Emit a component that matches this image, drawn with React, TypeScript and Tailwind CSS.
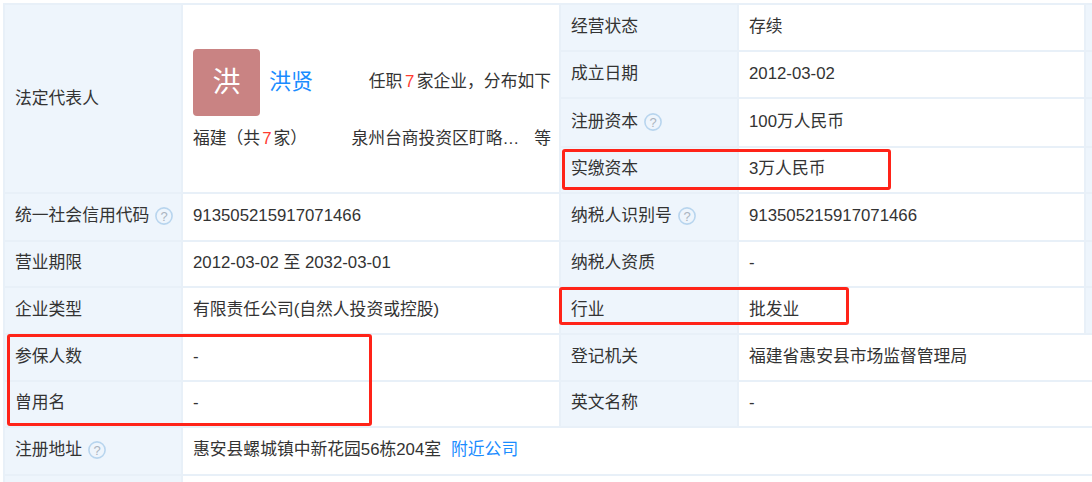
import React from "react";

function Help() {
  return (
    <svg width="18" height="18" viewBox="0 0 18 18" className="ml-[6px] shrink-0">
      <circle cx="9" cy="9" r="8.1" fill="none" stroke="#b8d5ee" strokeWidth="1.6" />
      <text x="9" y="13.6" textAnchor="middle" fontSize="13" fill="#aab4bf" fontFamily="Liberation Sans, sans-serif">?</text>
    </svg>
  );
}

function Label({ children, help, className = "" }: { children: React.ReactNode; help?: boolean; className?: string }) {
  return (
    <div className={`flex items-center border-t-2 border-l-2 border-[#e8f0f8] bg-[#eef5fc] pl-[10px] ${className}`}>
      <span>{children}</span>
      {help && <Help />}
    </div>
  );
}

function Value({ children, className = "" }: { children?: React.ReactNode; className?: string }) {
  return (
    <div className={`flex items-center border-t-2 border-l-2 border-[#e8f0f8] bg-white pb-[2px] pl-[10px] ${className}`}>
      {children}
    </div>
  );
}

function Edge({ className = "" }: { className?: string }) {
  return <div className={`border-t-2 border-l-2 border-[#e8f0f8] bg-[#eef5fc] ${className}`} />;
}

function Blank() {
  return <div className="border-t-2 border-[#e8f0f8] bg-white" />;
}

export default function App() {
  return (
    <div className="relative h-[482px] w-[1092px] overflow-hidden bg-white pt-[3px] pl-[3px] font-['Liberation_Sans','Noto_Sans_CJK_SC',sans-serif] text-[16.8px] text-[#333]">
      <div className="grid grid-cols-[178px_378px_178px_347px_8px] grid-rows-[47px_47px_49px_46px_48px_46px_47px_47px_46px_48px_8px]">
        <Label className="row-span-4">法定代表人</Label>
        <div className="row-span-4 flex flex-col justify-center gap-[10px] border-t-2 border-l-2 border-[#e8f0f8] bg-white pt-[4px] pr-[8px] pl-[10px]">
          <div className="flex items-center">
            <div className="flex h-[67px] w-[67px] items-center justify-center rounded-[4px] bg-[#c98383] text-[28px] text-white">洪</div>
            <span className="mb-[3px] ml-[9px] text-[22px] text-[#1a8cff]">洪贤</span>
            <span className="mb-[3px] ml-auto whitespace-nowrap">
              任职<span className="mx-[2.5px] text-[#ff3b30]">7</span>家企业，分布如下
            </span>
          </div>
          <div className="flex items-center">
            <span className="whitespace-nowrap">
              福建（共<span className="mx-[2px] text-[#ff3b30]">7</span>家）
            </span>
            <span className="ml-auto whitespace-nowrap">泉州台商投资区盯略…</span>
            <span className="ml-[15px]">等</span>
          </div>
        </div>

        <Label className="pb-[2px]">经营状态</Label>
        <Value>存续</Value>
        <Edge />
        <Label className="pb-[2px]">成立日期</Label>
        <Value>2012-03-02</Value>
        <Edge />
        <Label help className="pb-[2px]">注册资本</Label>
        <Value>100万人民币</Value>
        <Edge />
        <Label className="pb-[2px]">实缴资本</Label>
        <Value>3万人民币</Value>
        <Edge />

        <Label help className="pb-[2px]">统一社会信用代码</Label>
        <Value>913505215917071466</Value>
        <Label help className="pb-[2px]">纳税人识别号</Label>
        <Value>913505215917071466</Value>
        <Edge />

        <Label className="pb-[2px]">营业期限</Label>
        <Value>2012-03-02 至 2032-03-01</Value>
        <Label className="pb-[2px]">纳税人资质</Label>
        <Value>-</Value>
        <Edge />

        <Label className="pb-[2px]">企业类型</Label>
        <Value>有限责任公司(自然人投资或控股)</Value>
        <Label className="pb-[2px]">行业</Label>
        <Value>批发业</Value>
        <Edge />

        <Label className="pb-[2px]">参保人数</Label>
        <Value>-</Value>
        <Label className="pb-[2px]">登记机关</Label>
        <Value>福建省惠安县市场监督管理局</Value>
        <Blank />

        <Label className="pb-[2px]">曾用名</Label>
        <Value>-</Value>
        <Label className="pb-[2px]">英文名称</Label>
        <Value>-</Value>
        <Blank />

        <Label help className="pb-[2px]">注册地址</Label>
        <Value className="col-span-4">
          惠安县螺城镇中新花园56栋204室
          <span className="ml-[10px] text-[#1a8cff]">附近公司</span>
        </Value>

        <Label>{""}</Label>
        <Value className="col-span-4" />
      </div>

      <div className="absolute top-[149px] left-[562px] h-[41px] w-[329px] rounded-[3px] border-[3px] border-[#ff2318]" />
      <div className="absolute top-[287px] left-[559px] h-[38px] w-[290px] rounded-[3px] border-[3px] border-[#ff2318]" />
      <div className="absolute top-[334px] left-[7px] h-[92px] w-[365px] rounded-[3px] border-[3px] border-[#ff2318]" />
    </div>
  );
}
